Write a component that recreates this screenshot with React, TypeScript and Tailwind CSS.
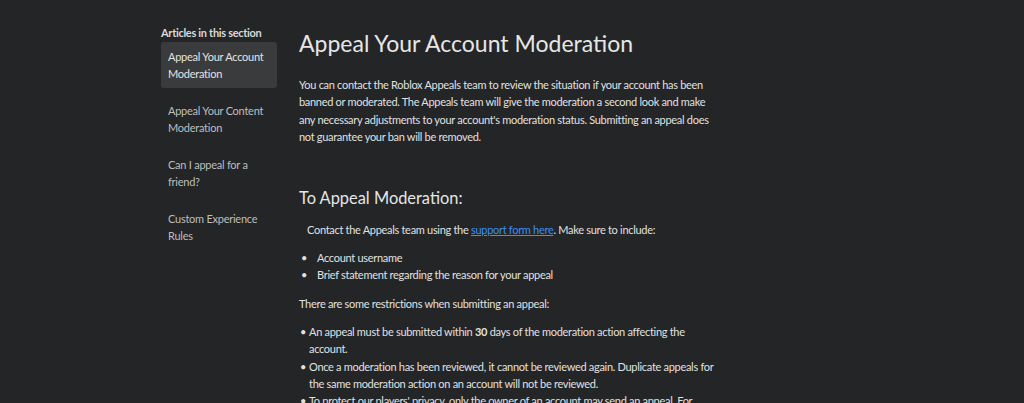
import React from "react";

const navItems = [
  { label: ["Appeal Your Account", "Moderation"], active: true },
  { label: ["Appeal Your Content", "Moderation"], active: false },
  { label: ["Can I appeal for a", "friend?"], active: false },
  { label: ["Custom Experience", "Rules"], active: false },
];

export default function App() {
  return (
    <div className="min-h-[403px] w-full bg-[#232527] font-['Lato','Noto_Sans',sans-serif] text-[#e1e1e1] overflow-hidden">
      <div className="flex pl-[161px] pt-[26px] gap-[22px]">
        {/* Sidebar */}
        <aside className="w-[116px] shrink-0">
          <h3 className="text-[11px] tracking-[-0.3px] font-bold leading-[14px] text-[#d8d9d9] whitespace-nowrap">
            Articles in this section
          </h3>
          <ul className="mt-[2px] flex flex-col gap-[8px]">
            {navItems.map((item) => (
              <li
                key={item.label[0]}
                className={`rounded-[3px] px-[7px] py-[6px] text-[11px] tracking-[-0.25px] leading-[17px] whitespace-nowrap ${
                  item.active ? "bg-[#393b3d] text-[#e3e3e3]" : "text-[#bdbebe]"
                }`}
              >
                {item.label[0]}
                <br />
                {item.label[1]}
              </li>
            ))}
          </ul>
        </aside>

        {/* Article */}
        <main className="w-[420px] shrink-0 text-[11px] tracking-[-0.3px]">
          <h1 className="text-[23px] tracking-normal leading-[34px] text-[#e6e6e6] whitespace-nowrap">
            Appeal Your Account Moderation
          </h1>
          <p className="mt-[16px] leading-[17.3px] whitespace-nowrap">
            You can contact the Roblox Appeals team to review the situation if your account has been
            <br />
            banned or moderated. The Appeals team will give the moderation a second look and make
            <br />
            any necessary adjustments to your account's moderation status. Submitting an appeal does
            <br />
            not guarantee your ban will be removed.
          </p>

          <h2 className="mt-[41px] text-[16.4px] tracking-normal leading-[24px] text-[#e6e6e6]">
            To Appeal Moderation:
          </h2>
          <p className="mt-[11px] pl-[8px] leading-[17px]">
            Contact the Appeals team using the{" "}
            <a href="#" className="text-[#3d8ef5] underline">
              support form here
            </a>
            . Make sure to include:
          </p>
          <ul className="mt-[11px] leading-[17.3px]">
            <li className="flex">
              <span className="w-[18px] pl-[2px]">•</span>
              <span>Account username</span>
            </li>
            <li className="flex">
              <span className="w-[18px] pl-[2px]">•</span>
              <span>Brief statement regarding the reason for your appeal</span>
            </li>
          </ul>

          <p className="mt-[11px] leading-[17px]">
            There are some restrictions when submitting an appeal:
          </p>
          <ul className="mt-[11px] leading-[17.4px] whitespace-nowrap">
            <li className="flex">
              <span className="w-[10px] pl-[1px]">•</span>
              <span>
                An appeal must be submitted within <b className="font-bold">30</b> days of the moderation action affecting the
                <br />
                account.
              </span>
            </li>
            <li className="flex">
              <span className="w-[10px] pl-[1px]">•</span>
              <span>
                Once a moderation has been reviewed, it cannot be reviewed again. Duplicate appeals for
                <br />
                the same moderation action on an account will not be reviewed.
              </span>
            </li>
            <li className="flex">
              <span className="w-[10px] pl-[1px]">•</span>
              <span>
                To protect our players' privacy, only the owner of an account may send an appeal. For
                <br />
                more information, please contact our support team.
              </span>
            </li>
          </ul>
        </main>
      </div>
    </div>
  );
}
